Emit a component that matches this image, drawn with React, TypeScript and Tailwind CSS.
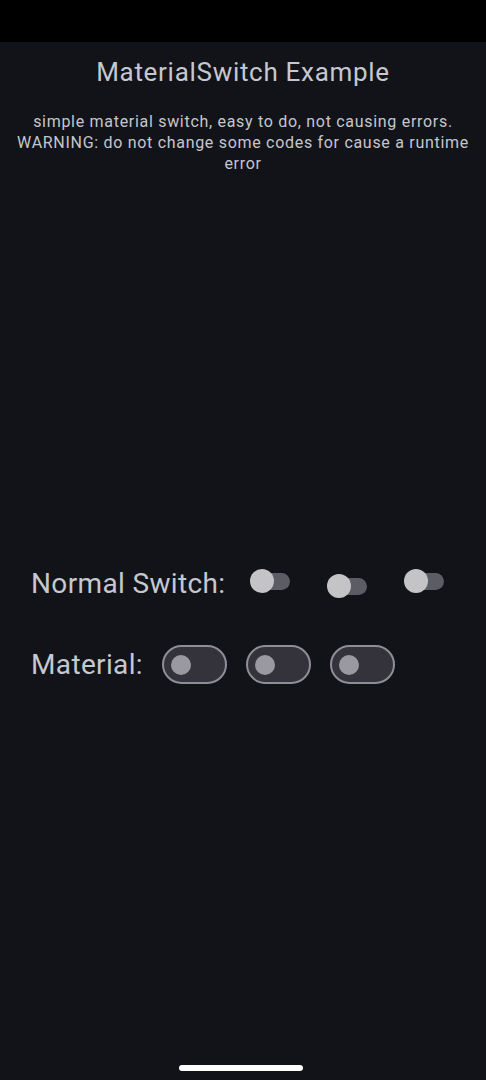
import { useState } from "react";

const font = { fontFamily: "Roboto, 'Noto Sans', sans-serif" };

function NormalSwitch({ shift = false }: { shift?: boolean }) {
  return (
    <div className={`relative h-[24px] w-[40px] ${shift ? "mt-[5px]" : ""}`}>
      <div className="absolute left-[7px] top-[4px] h-[17px] w-[33px] rounded-full bg-[#5c5c64]" />
      <div className="absolute left-0 top-0 h-[24px] w-[24px] rounded-full bg-[#c4c4c6]" />
    </div>
  );
}

function MaterialSwitch() {
  const [on, setOn] = useState(false);
  return (
    <button
      onClick={() => setOn(!on)}
      className={`flex h-[39px] w-[65px] items-center rounded-full border-2 border-[#8f8e97] bg-[#34333b] px-[7px] ${
        on ? "justify-end" : "justify-start"
      }`}
    >
      <span className="h-[20px] w-[20px] rounded-full bg-[#9a99a1]" />
    </button>
  );
}

export default function App() {
  return (
    <div style={font} className="flex h-[1080px] w-full flex-col bg-[#111318] text-[#c6c7cf]">
      <div className="h-[42px] w-full bg-black" />

      <h1 className="mt-[14px] text-center text-[26px] leading-[32px] tracking-[0.7px]">
        MaterialSwitch Example
      </h1>
      <p className="mt-[23px] px-2 text-center text-[16px] leading-[21px] tracking-[0.7px] text-[#c5c6cd]">
        simple material switch, easy to do, not causing errors.
        <br />
        WARNING: do not change some codes for cause a runtime error
      </p>

      <div className="mt-[394px] flex items-start pl-[31px]">
        <span className="mr-[25px] text-[28px] leading-[32px] tracking-[0.35px]">Normal Switch:</span>
        <div className="mt-[1px] flex gap-[37px]">
          <NormalSwitch />
          <NormalSwitch shift />
          <NormalSwitch />
        </div>
      </div>

      <div className="mt-[45px] flex items-center gap-[19px] pl-[31px]">
        <span className="text-[28px] leading-[32px] tracking-[0.35px]">Material:</span>
        <div className="flex gap-[19px]">
          <MaterialSwitch />
          <MaterialSwitch />
          <MaterialSwitch />
        </div>
      </div>

      <div className="mt-auto mb-[9px] flex justify-center">
        <div className="ml-[-4px] h-[6px] w-[124px] rounded-full bg-white" />
      </div>
    </div>
  );
}
